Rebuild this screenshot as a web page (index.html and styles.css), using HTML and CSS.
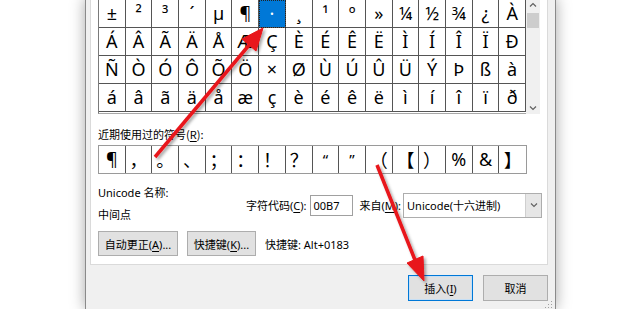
FILE: index.html
```html
<!DOCTYPE html>
<html lang="zh-CN">
<head>
    <meta charset="UTF-8">
    <title>符号</title>
    <link rel="stylesheet" href="styles.css">
</head>
<body>
    <div class="dialog">
        <div class="panel">
            <div class="charmap">
                <div class="grid">
                    <span class="cell">±</span><span class="cell">²</span><span class="cell">³</span><span class="cell">´</span>
                    <span class="cell">µ</span><span class="cell">¶</span><span class="cell selected">·</span><span class="cell">¸</span>
                    <span class="cell">¹</span><span class="cell">º</span><span class="cell">»</span><span class="cell">¼</span>
                    <span class="cell">½</span><span class="cell">¾</span><span class="cell">¿</span><span class="cell">À</span>

                    <span class="cell">Á</span><span class="cell">Â</span><span class="cell">Ã</span><span class="cell">Ä</span>
                    <span class="cell">Å</span><span class="cell">Æ</span><span class="cell">Ç</span><span class="cell">È</span>
                    <span class="cell">É</span><span class="cell">Ê</span><span class="cell">Ë</span><span class="cell">Ì</span>
                    <span class="cell">Í</span><span class="cell">Î</span><span class="cell">Ï</span><span class="cell">Ð</span>

                    <span class="cell">Ñ</span><span class="cell">Ò</span><span class="cell">Ó</span><span class="cell">Ô</span>
                    <span class="cell">Õ</span><span class="cell">Ö</span><span class="cell">×</span><span class="cell">Ø</span>
                    <span class="cell">Ù</span><span class="cell">Ú</span><span class="cell">Û</span><span class="cell">Ü</span>
                    <span class="cell">Ý</span><span class="cell">Þ</span><span class="cell">ß</span><span class="cell">à</span>

                    <span class="cell">á</span><span class="cell">â</span><span class="cell">ã</span><span class="cell">ä</span>
                    <span class="cell">å</span><span class="cell">æ</span><span class="cell">ç</span><span class="cell">è</span>
                    <span class="cell">é</span><span class="cell">ê</span><span class="cell">ë</span><span class="cell">ì</span>
                    <span class="cell">í</span><span class="cell">î</span><span class="cell">ï</span><span class="cell">ð</span>
                </div>
                <div class="scrollbar">
                    <svg class="sb-arrow" width="14" height="12" viewBox="0 0 14 12"><path d="M4 7.5 L7 4.5 L10 7.5" fill="none" stroke="#606060" stroke-width="1.2"/></svg>
                    <span class="sb-thumb"></span>
                    <span class="sb-track"></span>
                    <svg class="sb-arrow" width="14" height="12" viewBox="0 0 14 12"><path d="M4 4.5 L7 7.5 L10 4.5" fill="none" stroke="#606060" stroke-width="1.2"/></svg>
                </div>
            </div>

            <div class="recent-label">近期使用过的符号(<u>R</u>):</div>
            <div class="recent">
                <span class="rcell sym">¶</span><span class="rcell">，</span><span class="rcell">。</span><span class="rcell">、</span>
                <span class="rcell">；</span><span class="rcell">：</span><span class="rcell">！</span><span class="rcell">？</span>
                <span class="rcell sym quote">“</span><span class="rcell sym quote">”</span><span class="rcell">（</span><span class="rcell">【</span>
                <span class="rcell">）</span><span class="rcell sym">%</span><span class="rcell sym">&amp;</span><span class="rcell">】</span>
            </div>

            <div class="info">
                <div class="name-col">
                    <div>Unicode 名称:</div>
                    <div>中间点</div>
                </div>
                <div class="code-row">
                    <span>字符代码(<u>C</u>):</span>
                    <span class="input">00B7</span>
                    <span class="from-label">来自(<u>M</u>):</span>
                    <span class="select">
                        <span class="select-text">Unicode(十六进制)</span>
                        <span class="drop">
                            <svg width="14" height="10" viewBox="0 0 14 10"><path d="M4 3.5 L7 6.5 L10 3.5" fill="none" stroke="#606060" stroke-width="1.1"/></svg>
                        </span>
                    </span>
                </div>
            </div>

            <div class="actions">
                <button class="btn btn-auto">自动更正(<u>A</u>)...</button>
                <button class="btn btn-key">快捷键(<u>K</u>)...</button>
                <span>快捷键: Alt+0183</span>
            </div>
        </div>

        <div class="footer">
            <button class="btn btn-foot primary">插入(<u>I</u>)</button>
            <button class="btn btn-foot">取消</button>
        </div>
        <svg class="grip" width="8" height="8" viewBox="0 0 8 8">
            <rect x="6" y="0" width="1" height="1" fill="#a0a0a0"/>
            <rect x="3" y="3" width="1" height="1" fill="#a0a0a0"/>
            <rect x="6" y="3" width="1" height="1" fill="#a0a0a0"/>
            <rect x="0" y="6" width="1" height="1" fill="#a0a0a0"/>
            <rect x="3" y="6" width="1" height="1" fill="#a0a0a0"/>
            <rect x="6" y="6" width="1" height="1" fill="#a0a0a0"/>
        </svg>
    </div>

    <!-- 标注箭头 -->
    <svg class="arrows" width="620" height="309" viewBox="0 0 620 309">
        <defs>
            <filter id="shadow" x="-20%" y="-20%" width="140%" height="140%">
                <feDropShadow dx="2" dy="2" stdDeviation="1.5" flood-color="#000" flood-opacity="0.35"/>
            </filter>
        </defs>
        <g filter="url(#shadow)" fill="#e8141a" stroke="#e8141a">
            <line x1="155" y1="157" x2="250" y2="44" stroke-width="3.5"/>
            <polygon points="263,28 256,51 242,39" stroke-width="1"/>
            <line x1="377" y1="165" x2="415" y2="260" stroke-width="3.5"/>
            <polygon points="424,281 423,256 407,263" stroke-width="1"/>
        </g>
    </svg>
</body>
</html>
```

FILE: styles.css
```css
body {
    margin: 0;
    width: 620px;
    height: 309px;
    overflow: hidden;
    position: relative;
    background-color: #fff;
    font-family: "Noto Sans", "Noto Sans CJK SC", sans-serif;
    font-size: 11px;
    color: #000;
}
u {
    text-decoration-thickness: 1px;
    text-underline-offset: 2px;
}
.dialog {
    position: relative;
    margin-left: 85px;
    margin-top: -2px;
    width: 471px;
    height: 311px;
    box-sizing: border-box;
    padding: 0 7px 0 4px;
    background-color: #f0f0f0;
    border-left: 1px solid #8a8a8a;
    border-right: 1px solid #8a8a8a;
    box-shadow: 0 0 14px rgba(0,0,0,0.35);
}
.panel {
    width: 458px;
    height: 267px;
    box-sizing: border-box;
    padding: 0 0 0 7px;
    background-color: #fff;
    border: 1px solid #dadada;
    border-top: none;
}
.charmap {
    display: flex;
    padding-top: 1px;
}
.grid {
    width: 427px;
    display: grid;
    grid-template-columns: repeat(16, 1fr);
    border-left: 1px solid #7a7a7a;
    border-top: 1px solid #555;
    border-bottom: 1px solid #a8a8a8;
    padding-bottom: 1px;
}
.cell {
    height: 27px;
    line-height: 27px;
    text-align: center;
    font-size: 18px;
    border-right: 1px solid #555;
    border-bottom: 1px solid #555;
}
.cell.selected {
    background-color: #0078d7;
    color: #fff;
    outline: 1px dotted #222;
    outline-offset: -1px;
}
.scrollbar {
    width: 14px;
    height: 115px;
    background-color: #f0f0f0;
    display: flex;
    flex-direction: column;
    align-items: center;
}
.sb-arrow {
    flex: none;
}
.sb-thumb {
    width: 12px;
    height: 15px;
    margin-top: 2px;
    background-color: #cdcdcd;
}
.sb-track {
    flex: 1;
}
.recent-label {
    margin-top: 12px;
    line-height: 16px;
    font-family: "Noto Sans CJK SC", sans-serif;
}
.recent {
    margin-top: 3px;
    width: 429px;
    display: grid;
    grid-template-columns: repeat(16, 1fr);
    border: 1px solid #9a9a9a;
    box-sizing: border-box;
    height: 29px;
}
.rcell {
    height: 27px;
    line-height: 27px;
    text-align: center;
    font-size: 18px;
    font-family: "Noto Sans CJK SC", sans-serif;
    border-right: 1px solid #555;
    overflow: hidden;
}
.rcell:last-child {
    border-right: none;
}
.rcell.sym {
    font-family: "Noto Sans", sans-serif;
}
.rcell.quote {
    font-size: 15px;
}
.info {
    margin-top: 8px;
    display: flex;
    align-items: center;
}
.name-col {
    width: 148px;
    line-height: 22px;
}
.code-row {
    display: flex;
    align-items: center;
    margin-top: 2px;
}
.input {
    margin-left: 3px;
    width: 43px;
    height: 21px;
    line-height: 19px;
    box-sizing: border-box;
    padding-left: 3px;
    border: 1px solid #a0a0a0;
    background-color: #fff;
}
.from-label {
    margin-left: 7px;
}
.select {
    margin-left: 2px;
    width: 139px;
    height: 25px;
    box-sizing: border-box;
    display: flex;
    border: 1px solid #adadad;
    background-color: #fff;
}
.select-text {
    flex: 1;
    line-height: 23px;
    padding-left: 3px;
}
.drop {
    width: 15px;
    display: flex;
    align-items: center;
    justify-content: center;
    background-color: #e6e6e6;
    border-left: 1px solid #cfcfcf;
}
.actions {
    margin-top: 5px;
    display: flex;
    align-items: center;
    gap: 9px;
}
.btn {
    height: 25px;
    padding: 0;
    font-family: inherit;
    font-size: 11px;
    color: #000;
    background-color: #e1e1e1;
    border: 1px solid #adadad;
}
.btn-auto {
    width: 80px;
}
.btn-key {
    width: 69px;
}
.footer {
    margin-top: 10px;
    display: flex;
    justify-content: flex-end;
    gap: 10px;
}
.btn-foot {
    width: 65px;
    height: 26px;
}
.btn.primary {
    border-color: #0078d7;
    box-shadow: inset 0 0 0 1px #c6dff5;
}
.grip {
    position: absolute;
    right: 2px;
    top: 303px;
}
.arrows {
    position: absolute;
    left: 0;
    top: 0;
    pointer-events: none;
}
```
